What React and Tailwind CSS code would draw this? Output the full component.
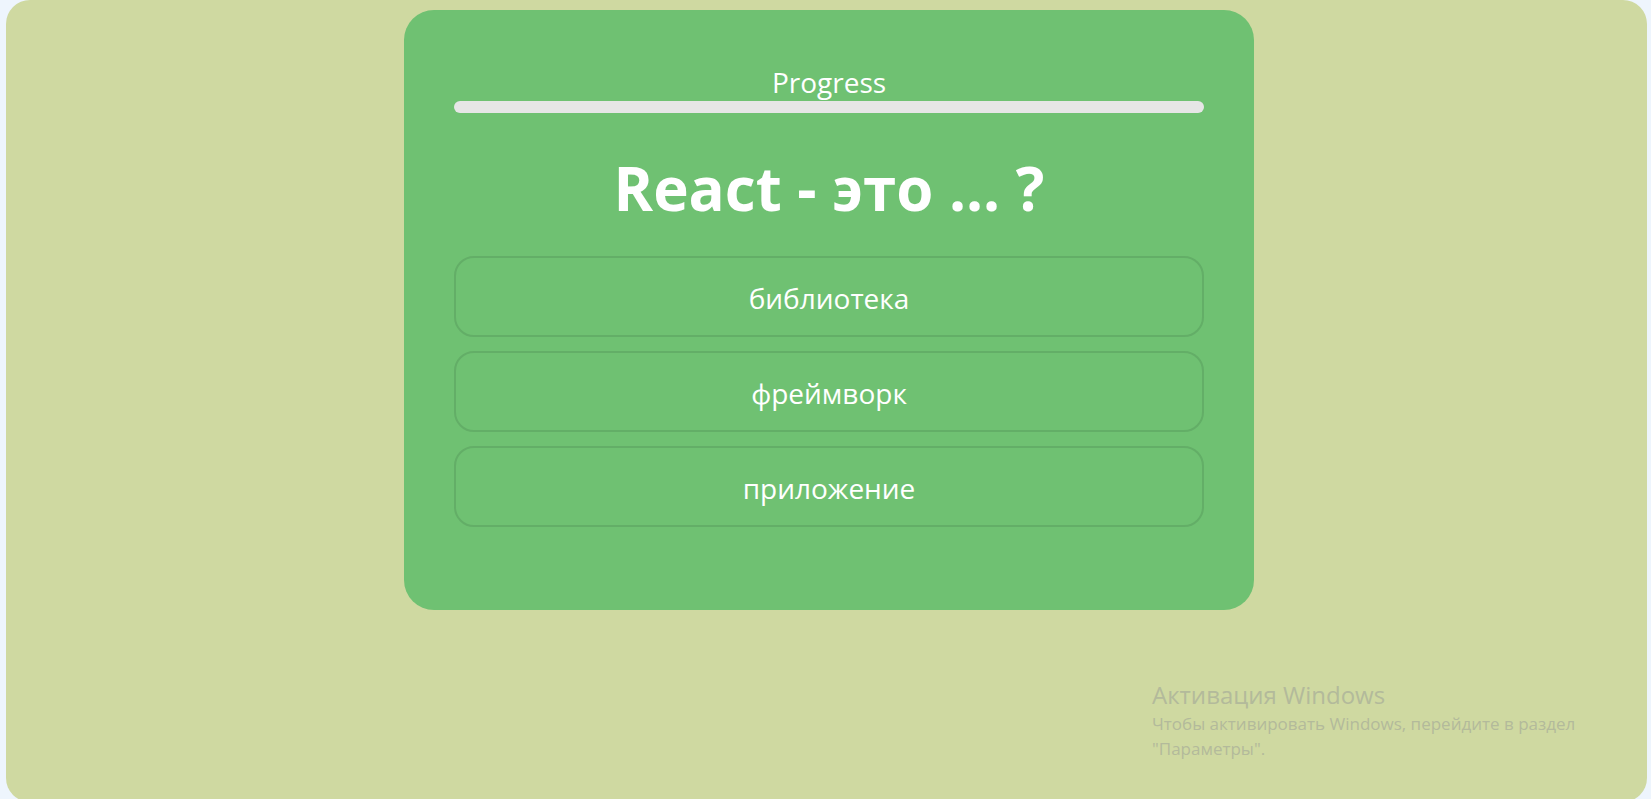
export default function App() {
  const answers = ["библиотека", "фреймворк", "приложение"];
  return (
    <div
      className="h-[799px] overflow-hidden bg-[#eef5fd] pl-[6px] pr-[4px]"
      style={{ fontFamily: '"Open Sans", "Noto Sans", sans-serif' }}
    >
      <div className="relative h-[802px] rounded-[24px] bg-[#cfd9a1] pl-[5px] pt-[10px]">
        <div className="mx-auto flex h-[600px] w-[850px] flex-col rounded-[30px] bg-[#6fc172] px-[50px] pt-[55px]">
          <div className="text-center text-[28px] leading-[34px] text-white">Progress</div>
          <div className="mt-[2px] h-[12px] rounded-full bg-[#e6e6e6]"></div>
          <h1 className="mt-[39px] text-center text-[60px] font-bold leading-[72px] text-white">
            React - это ... ?
          </h1>
          <div className="mt-[32px] flex flex-col gap-[14px]">
            {answers.map((a) => (
              <button
                key={a}
                className="flex h-[81px] items-center justify-center rounded-[20px] border-2 border-[#63ae67] bg-[#6fc172] pt-[2px] text-[28px] text-white"
              >
                {a}
              </button>
            ))}
          </div>
        </div>
        <div className="absolute left-[1146px] top-[679px] text-[#b3ba9b]">
          <div className="text-[24px] leading-[32px]">Активация Windows</div>
          <div className="text-[17px] leading-[25px]">
            Чтобы активировать Windows, перейдите в раздел
            <br />
            "Параметры".
          </div>
        </div>
      </div>
    </div>
  );
}
